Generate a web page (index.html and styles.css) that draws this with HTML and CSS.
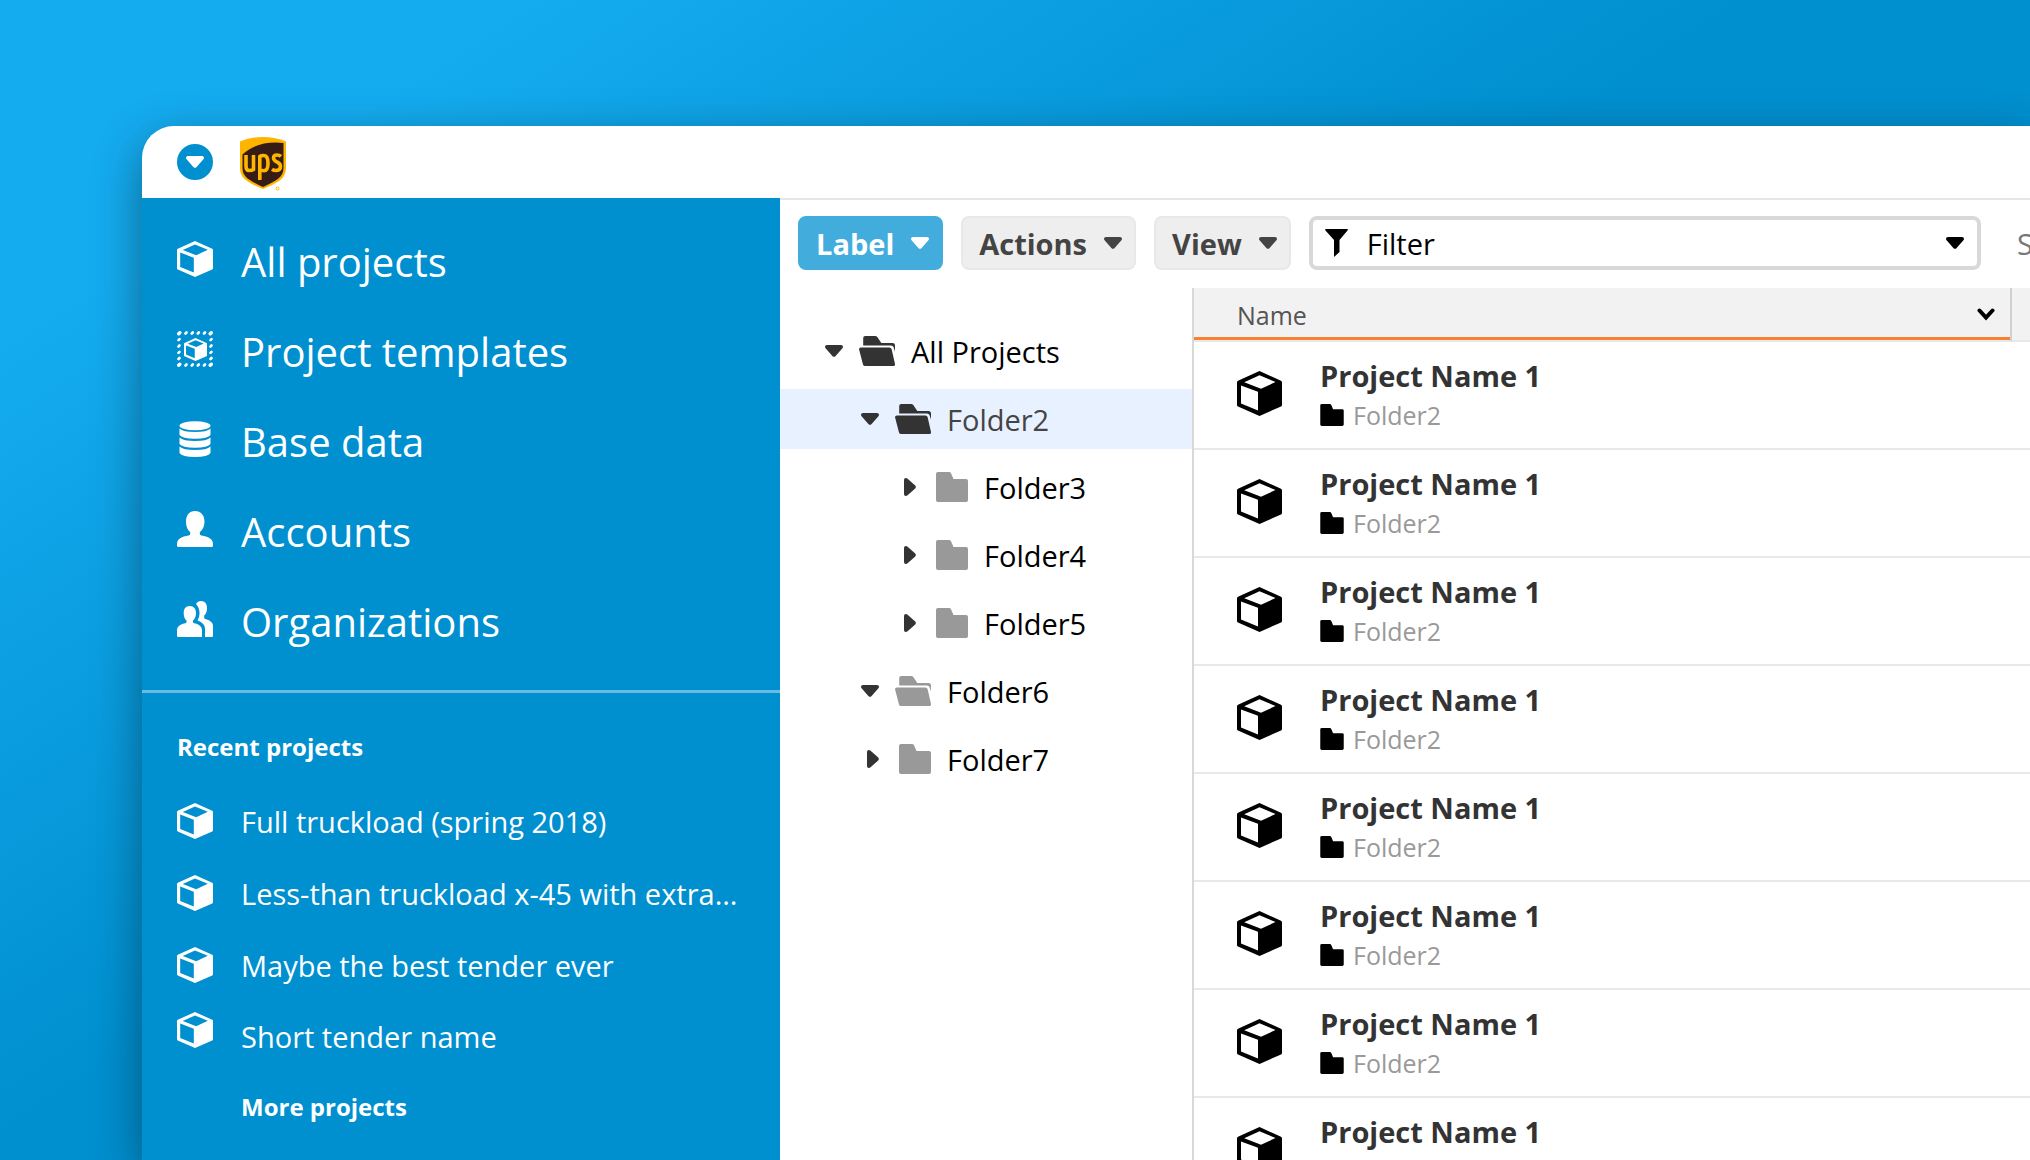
FILE: index.html
```html
<!DOCTYPE html>
<html lang="en">
<head>
<meta charset="utf-8">
<title>All projects</title>
<link rel="stylesheet" href="styles.css">
</head>
<body>
<svg class="sprite" aria-hidden="true">
  <symbol id="cube" viewBox="0 0 45 45"><path fill-rule="evenodd" d="M22.5 0 44 9.700Q45 10.200 45 11.200V34Q45 35 44 35.500L22.500 45 1 35.500Q0 35 0 34V11.200Q0 10.200 1 9.700ZM7.200 11.300 24 17.800 38.500 11 22.500 4.300ZM4 14.500V32.500L21 39.500V20.800Z"/></symbol>
  <symbol id="caret-down" viewBox="0 0 18 12"><path d="M2 0H16Q18 0 18 1.800 18 2.800 17.200 3.600L10.400 11.200Q9 12.500 7.600 11.200L.8 3.600Q0 2.800 0 1.800 0 0 2 0Z"/></symbol>
  <symbol id="caret-right" viewBox="0 0 12 18"><path d="M0 2V16Q0 18 1.800 18 2.800 18 3.600 17.200L11.200 10.400Q12.500 9 11.200 7.600L3.600.8Q2.800 0 1.800 0 0 0 0 2Z"/></symbol>
  <symbol id="folder" viewBox="0 0 32 30"><path d="M2 0H13Q14.300 0 15 1.200L17.500 7H30Q32 7 32 9V28Q32 30 30 30H2Q0 30 0 28V2Q0 0 2 0Z"/></symbol>
  <symbol id="folder-open" viewBox="0 0 36 30"><path d="M4.200 9.500V2Q4.200 0 6.200 0H16Q17.500 0 18.500 1.200L22.300 7H33.500Q36 7 36 9.500V15.500L34.500 11Q34 9.500 32 9.500Z"/><path d="M1.800 11.500H30.500Q32 11.500 32.600 13L36 28Q36.200 30 34.500 30H6Q4.500 30 4 28.500L.1 13.500Q-.2 11.500 1.800 11.500Z"/></symbol>
</svg>

<div class="window">
  <header class="topbar">
    <button class="menu-button" type="button" aria-label="Open menu"><svg width="18" height="12"><use href="#caret-down"/></svg></button>
    <svg class="logo" width="46" height="58" viewBox="0 -4 46 58" role="img" aria-label="UPS">
      <path fill="#ffb500" d="M0 4.500Q10 0 23 0T46 4.500V31C46 42 37 46 23 52 9 46 0 42 0 31Z"/>
      <path fill="#351c15" d="M2.500 17.500C12 8 27 4 43.500 6V31C43.500 40 36 44 23 50 10 44 2.500 40 2.500 31Z"/>
      <g fill="none" stroke="#ffb500" stroke-width="3.600">
        <path d="M6 18V29Q6 33.500 9 33.500 12 33.500 13.500 32.500V18"/>
        <path d="M19.800 43V19.500Q21 18.500 23.500 18.500 28 18.500 28 26 28 33.700 24 33.700 21.500 33.700 20 32.800"/>
        <path d="M41 19.300Q39.500 18 37 18 33.500 18 33.500 21 33.500 23.200 37 25 40.500 26.600 40.500 29.500 40.500 33 36.500 33.500 34 33.700 32 32.200"/>
      </g>
      <circle cx="37.500" cy="51.500" r="1.500" fill="none" stroke="#ffb500"/>
    </svg>
  </header>

  <div class="body">
    <aside class="sidebar">
      <nav class="nav">
        <a href="#"><svg width="36" height="36"><use href="#cube"/></svg>All projects</a>
        <a href="#"><svg width="36" height="36" viewBox="0 0 36 36">
          <use href="#cube" x="7" y="7" width="23" height="23"/>
          <g fill="none" stroke="#fff" stroke-width="2.600" stroke-linecap="round">
            <path d="M8.500 2.500 9.500 1.500M14.800 2.500 15.800 1.500M20.800 2.500 21.800 1.500M27 2.500 28 1.500M8.500 34.500 9.500 33.500M14.800 34.500 15.800 33.500M20.800 34.500 21.800 33.500M27 34.500 28 33.500M1.500 9.200 2.500 8.200M1.500 15.500 2.500 14.500M1.500 21.800 2.500 20.800M1.500 28 2.500 27M33.500 9.200 34.500 8.200M33.500 15.500 34.500 14.500M33.500 21.800 34.500 20.800M33.500 28 34.500 27"/>
            <path stroke-width="3.400" d="M1.700 2.800 2.800 1.700M33.200 2.800 34.300 1.700M1.700 34.300 2.800 33.200M33.200 34.300 34.300 33.200"/>
          </g></svg>Project templates</a>
        <a href="#"><svg width="36" height="36" viewBox="0 0 36 36"><ellipse cx="18" cy="4.700" rx="15.500" ry="4.500"/><path d="M2.500 7.500Q6 11 18 11T33.500 7.500V14Q31 17.700 18 17.700T2.500 14ZM2.500 16.500Q6 20 18 20T33.500 16.500V23Q31 26.700 18 26.700T2.500 23ZM2.500 25.500Q6 29 18 29T33.500 25.500V32Q31 36 18 36T2.500 32Z"/></svg>Base data</a>
        <a href="#"><svg width="36" height="36" viewBox="0 0 36 36"><path d="M18 0C24 0 27.500 4.500 27.500 10.500 27.500 15.500 25.500 19 22.800 21.200V22.800Q22.800 24.200 24.500 24.600C31 25.500 36 28 36 33V34.500Q36 36 34.500 36H1.500Q0 36 0 34.500V33C0 28 5 25.500 11.500 24.600Q13.200 24.200 13.200 22.800V21.200C10.500 19 9 15.500 9 10.500 9 4.500 12 0 18 0Z"/></svg>Accounts</a>
        <a href="#"><svg width="36" height="36" viewBox="0 0 36 36"><path d="M12.700 5C17 5 19 8 19 12.300 19 15.500 17.800 18 16 19.500V21Q16 22 17 22.300C21.500 23 25 25.500 25 29V36H1.200Q0 36 0 34.800V29C0 25.500 4 23 8.500 22.300Q9.500 22 9.500 21V19.500C7.700 18 6.700 15.500 6.700 12.300 6.700 8 8.500 5 12.700 5Z"/><path d="M19 3Q20.500 0 24 0C28 0 30 3 30 7.300 30 10.500 29 13 27.200 14.500V16.500Q27.200 17.500 28.200 18C33 19.200 36 21.500 36 25V34.800Q36 36 34.800 36H28V28C28 24 25.500 21.300 20.500 19.500Q22.500 16.500 22.500 12.500 22.500 6.500 19 3Z"/></svg>Organizations</a>
      </nav>
      <section class="recent">
        <h2>Recent projects</h2>
        <ul>
          <li><a href="#"><svg width="36" height="36"><use href="#cube"/></svg>Full truckload (spring 2018)</a></li>
          <li><a href="#"><svg width="36" height="36"><use href="#cube"/></svg>Less-than truckload x-45 with extra...</a></li>
          <li><a href="#"><svg width="36" height="36"><use href="#cube"/></svg>Maybe the best tender ever</a></li>
          <li><a class="on-baseline" href="#"><svg width="36" height="36"><use href="#cube"/></svg>Short tender name</a></li>
        </ul>
        <a class="more" href="#">More projects</a>
      </section>
    </aside>

    <main class="main">
      <div class="toolbar">
        <button class="btn primary" type="button">Label<svg width="18" height="12"><use href="#caret-down"/></svg></button>
        <button class="btn" type="button">Actions<svg width="18" height="12"><use href="#caret-down"/></svg></button>
        <button class="btn" type="button">View<svg width="18" height="12"><use href="#caret-down"/></svg></button>
        <div class="filter">
          <svg width="24" height="28" viewBox="0 0 24 28"><path d="M1 0H22Q23.500 0 22.500 1.500L14.500 11V23L9 28V11L.5 1.500Q-.5 0 1 0Z"/></svg>
          <select aria-label="Filter"><option>Filter</option></select>
          <svg width="18" height="12"><use href="#caret-down"/></svg>
        </div>
        <input class="search" type="text" placeholder="Search" aria-label="Search">
      </div>

      <div class="content">
        <ul class="tree">
          <li class="level-1"><svg class="caret" width="18" height="12"><use href="#caret-down"/></svg><svg class="folder" width="36" height="30"><use href="#folder-open"/></svg>All Projects</li>
          <li class="level-2 selected"><svg class="caret" width="18" height="12"><use href="#caret-down"/></svg><svg class="folder" width="36" height="30"><use href="#folder-open"/></svg>Folder2</li>
          <li class="level-3"><svg class="caret" width="12" height="18"><use href="#caret-right"/></svg><svg class="folder grey" width="32" height="30"><use href="#folder"/></svg>Folder3</li>
          <li class="level-3"><svg class="caret" width="12" height="18"><use href="#caret-right"/></svg><svg class="folder grey" width="32" height="30"><use href="#folder"/></svg>Folder4</li>
          <li class="level-3"><svg class="caret" width="12" height="18"><use href="#caret-right"/></svg><svg class="folder grey" width="32" height="30"><use href="#folder"/></svg>Folder5</li>
          <li class="level-2"><svg class="caret" width="18" height="12"><use href="#caret-down"/></svg><svg class="folder grey" width="36" height="30"><use href="#folder-open"/></svg>Folder6</li>
          <li class="level-2"><svg class="caret" width="12" height="18"><use href="#caret-right"/></svg><svg class="folder grey" width="32" height="30"><use href="#folder"/></svg>Folder7</li>
        </ul>

        <table class="projects">
          <thead>
            <tr><th scope="col"><div class="head">Name<svg width="18" height="13" viewBox="0 0 18 13"><path d="M2.500 2.500 9 9.500 15.500 2.500" fill="none" stroke="#000" stroke-width="4" stroke-linecap="round"/></svg></div></th><td class="next"></td></tr>
          </thead>
          <tbody>
            <tr><td colspan="2"><div class="project"><svg width="45" height="45"><use href="#cube"/></svg><div><strong>Project Name 1</strong><span><svg width="24" height="22"><use href="#folder"/></svg>Folder2</span></div></div></td></tr>
            <tr><td colspan="2"><div class="project"><svg width="45" height="45"><use href="#cube"/></svg><div><strong>Project Name 1</strong><span><svg width="24" height="22"><use href="#folder"/></svg>Folder2</span></div></div></td></tr>
            <tr><td colspan="2"><div class="project"><svg width="45" height="45"><use href="#cube"/></svg><div><strong>Project Name 1</strong><span><svg width="24" height="22"><use href="#folder"/></svg>Folder2</span></div></div></td></tr>
            <tr><td colspan="2"><div class="project"><svg width="45" height="45"><use href="#cube"/></svg><div><strong>Project Name 1</strong><span><svg width="24" height="22"><use href="#folder"/></svg>Folder2</span></div></div></td></tr>
            <tr><td colspan="2"><div class="project"><svg width="45" height="45"><use href="#cube"/></svg><div><strong>Project Name 1</strong><span><svg width="24" height="22"><use href="#folder"/></svg>Folder2</span></div></div></td></tr>
            <tr><td colspan="2"><div class="project"><svg width="45" height="45"><use href="#cube"/></svg><div><strong>Project Name 1</strong><span><svg width="24" height="22"><use href="#folder"/></svg>Folder2</span></div></div></td></tr>
            <tr><td colspan="2"><div class="project"><svg width="45" height="45"><use href="#cube"/></svg><div><strong>Project Name 1</strong><span><svg width="24" height="22"><use href="#folder"/></svg>Folder2</span></div></div></td></tr>
            <tr><td colspan="2"><div class="project"><svg width="45" height="45"><use href="#cube"/></svg><div><strong>Project Name 1</strong><span><svg width="24" height="22"><use href="#folder"/></svg>Folder2</span></div></div></td></tr>
          </tbody>
        </table>
      </div>
    </main>
  </div>
</div>
</body>
</html>
```
FILE: styles.css
```css
* { box-sizing: border-box; }

body {
  margin: 0;
  height: 100vh;
  padding: 126px 0 0 142px;
  overflow: hidden;
  display: flex;
  background: linear-gradient(147deg, #14abef 0%, #14abef 14%, #008fcf 46%);
  font-family: "Open Sans", "Noto Sans", sans-serif;
  font-size: 29px;
  color: #000;
}

svg { flex: none; display: block; fill: currentColor; }
ul { list-style: none; margin: 0; padding: 0; }
a { color: inherit; text-decoration: none; }
button, input, select { font: inherit; }
.sprite { display: none; }

.window {
  flex: 1;
  min-width: 0;
  display: flex;
  flex-direction: column;
  overflow: hidden;
  background: #fff;
  border-radius: 32px 0 0 0;
  box-shadow: 0 16px 48px rgba(0, 0, 0, .4);
}

.topbar {
  flex: none;
  height: 72px;
  padding: 0 35px;
  display: flex;
  align-items: center;
  gap: 27px;
}

.menu-button {
  width: 36px;
  height: 36px;
  padding: 0;
  border: 0;
  border-radius: 50%;
  display: grid;
  place-items: center;
  background: #008fcf;
  color: #fff;
}

.body { flex: 1; min-height: 0; display: flex; }

/* Sidebar */
.sidebar {
  flex: none;
  width: 638px;
  background: #008fcf;
  color: #fff;
}

.nav {
  padding: 18px 35px 24px;
  border-bottom: 3px solid rgba(255, 255, 255, .4);
}

.nav a {
  height: 90px;
  display: flex;
  align-items: center;
  gap: 28px;
  font-size: 40px;
}

.nav svg { margin-bottom: 4px; }

.recent { padding: 36px 35px; }
.recent h2 { margin: 0 0 20px; font-size: 24px; line-height: 36px; font-weight: 700; }

.recent li a {
  height: 72px;
  display: flex;
  align-items: center;
  gap: 28px;
}

.recent li .on-baseline { align-items: baseline; line-height: 72px; }
.more { display: block; padding: 16px 0 0 64px; font-size: 24px; line-height: 36px; font-weight: 700; }

/* Toolbar */
.main { flex: 1; min-width: 0; border-top: 2px solid #e6e6e6; display: flex; flex-direction: column; }

.toolbar {
  flex: none;
  height: 88px;
  padding: 0 0 2px 18px;
  display: flex;
  align-items: center;
  gap: 18px;
}

.btn {
  height: 54px;
  padding: 0 12px 0 16px;
  display: flex;
  align-items: center;
  gap: 17px;
  border: 2px solid #e8e8e8;
  border-radius: 8px;
  background: #eee;
  color: #444;
  font-weight: 700;
  flex: none;
}

.btn.primary { border-color: #42addd; background: #42addd; color: #fff; }

.filter {
  flex: 1;
  height: 54px;
  padding: 0 13px 0 12px;
  display: flex;
  align-items: center;
  border: 4px solid #d8d8d8;
  border-radius: 8px;
}

.filter select {
  flex: 1;
  min-width: 0;
  padding: 0 18px;
  border: 0;
  background: none;
  color: #000;
  appearance: none;
}

.search { flex: none; width: 31px; padding: 0 0 0 18px; border: 0; background: none; }
.search::placeholder { color: #777; }

/* Folder tree */
.content { flex: 1; min-height: 0; display: flex; align-items: stretch; }
.tree { flex: none; width: 412px; padding-top: 33px; display: flex; flex-direction: column; gap: 8px; }
.tree li { height: 60px; display: flex; align-items: center; }
.level-1 { padding-left: 45px; }
.level-2 { padding-left: 81px; }
.level-3 { padding-left: 118px; }
.tree .selected { background: #e8f1ff; color: #444; }
.caret { color: #333; margin-right: 16px; }
.caret[width="12"] { margin-left: 6px; margin-right: 20px; }
.folder { color: #333; margin-right: 16px; }
.grey { color: #999; }

/* Project list */
.projects { flex: 1; align-self: flex-start; border-collapse: separate; border-spacing: 0; border-left: 2px solid #d8d8d8; }
.projects th, .projects td { padding: 0; }
.projects th { border-bottom: 2px solid #e8e8e8; border-right: 2px solid #d0d0d0; background: #f2f2f2; text-align: left; font-weight: 400; }
.projects .next { width: 18px; background: #f2f2f2; border-bottom: 2px solid #e8e8e8; }

.head {
  height: 52px;
  padding: 4px 15px 0 43px;
  border-bottom: 3px solid #f58233;
  display: flex;
  align-items: center;
  justify-content: space-between;
  font-size: 25px;
  color: #555;
}

.project {
  height: 108px;
  padding: 0 43px 4px;
  border-bottom: 2px solid #e8e8e8;
  display: flex;
  align-items: center;
  gap: 38px;
}

.project div { padding-top: 4px; }
.project strong { display: block; line-height: 40px; color: #333; }
.project span { display: flex; align-items: center; gap: 9px; font-size: 25px; line-height: 38px; color: #999; }
.project span svg { color: #000; }
```
